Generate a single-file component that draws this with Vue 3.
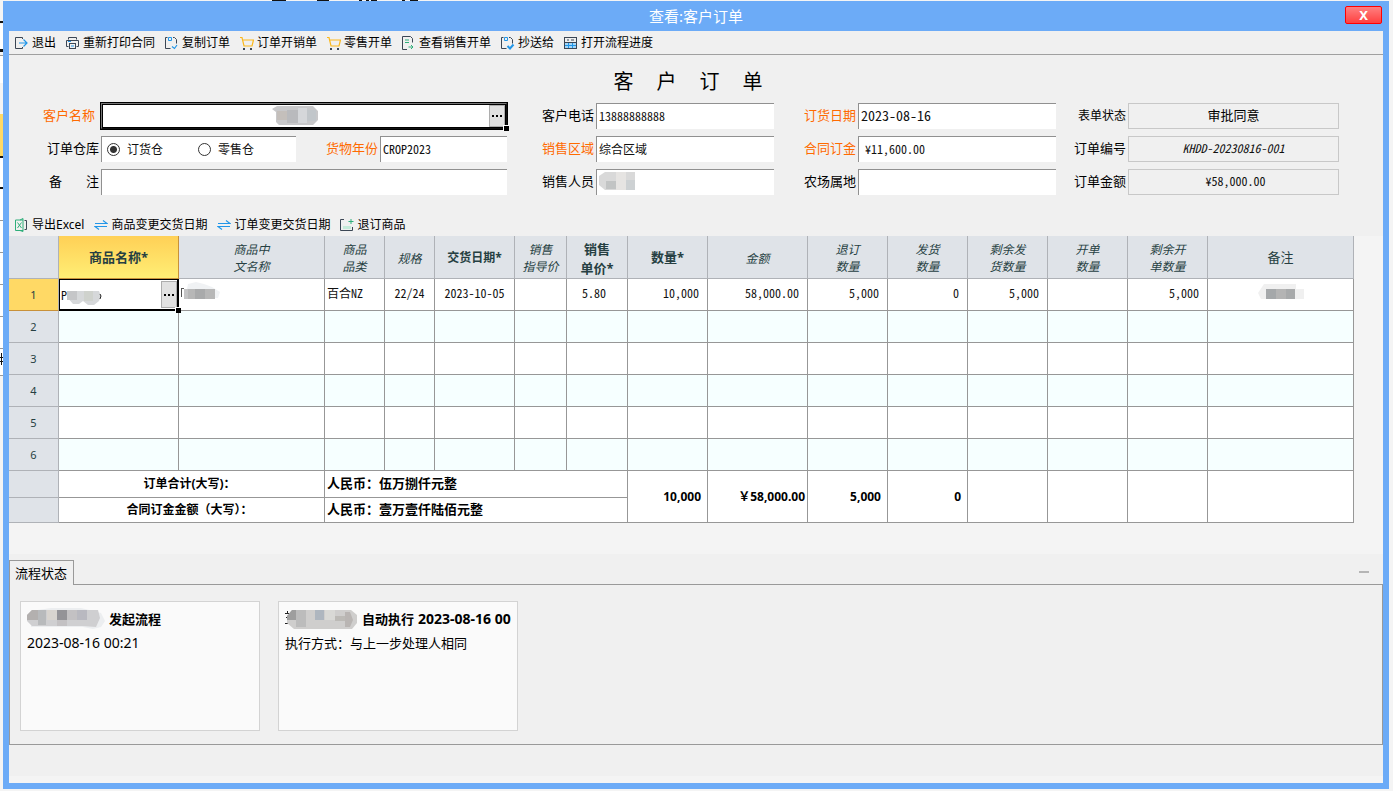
<script setup>
import { ref } from 'vue'

const mainActions = [
  { text: '退出', icon: 'exit' },
  { text: '重新打印合同', icon: 'print' },
  { text: '复制订单', icon: 'copy' },
  { text: '订单开销单', icon: 'cart' },
  { text: '零售开单', icon: 'cart' },
  { text: '查看销售开单', icon: 'doc' },
  { text: '抄送给', icon: 'send' },
  { text: '打开流程进度', icon: 'grid' },
]
const tableActions = [
  { text: '导出Excel', icon: 'excel' },
  { text: '商品变更交货日期', icon: 'swap' },
  { text: '订单变更交货日期', icon: 'swap' },
  { text: '退订商品', icon: 'back' },
]

const warehouse = ref('订货仓')
const cropYear = ref('CROP2023')
const remark = ref('')
const phone = ref('13888888888')
const region = ref('综合区域')
const orderDate = ref('2023-08-16')
const deposit = ref('￥11,600.00')
const farm = ref('')

const columns = [
  { lines: ['商品名称*'], width: 120, kind: 'bold active' },
  { lines: ['商品中', '文名称'], width: 146, kind: 'calc' },
  { lines: ['商品', '品类'], width: 60, kind: 'calc' },
  { lines: ['规格'], width: 50, kind: 'calc' },
  { lines: ['交货日期*'], width: 80, kind: 'bold small' },
  { lines: ['销售', '指导价'], width: 52, kind: 'calc' },
  { lines: ['销售', '单价*'], width: 61, kind: 'bold two' },
  { lines: ['数量*'], width: 80, kind: 'bold' },
  { lines: ['金额'], width: 100, kind: 'calc' },
  { lines: ['退订', '数量'], width: 80, kind: 'calc' },
  { lines: ['发货', '数量'], width: 80, kind: 'calc' },
  { lines: ['剩余发', '货数量'], width: 80, kind: 'calc' },
  { lines: ['开单', '数量'], width: 80, kind: 'calc' },
  { lines: ['剩余开', '单数量'], width: 80, kind: 'calc' },
  { lines: ['备注'], width: 146, kind: 'plain' },
]
const firstRow = [
  { v: '百合NZ', a: 'left' },
  { v: '22/24', a: 'center' },
  { v: '2023-10-05', a: 'center' },
  { v: '', a: 'left' },
  { v: '5.80', a: 'price' },
  { v: '10,000', a: 'right' },
  { v: '58,000.00', a: 'right' },
  { v: '5,000', a: 'right' },
  { v: '0', a: 'right' },
  { v: '5,000', a: 'right' },
  { v: '', a: 'right' },
  { v: '5,000', a: 'right' },
]
const totals = ['10,000', '￥58,000.00', '5,000', '0', '', '', '', '']
</script>

<template>
  <div class="desk">
    <svg class="behind" width="3" height="400" viewBox="0 0 3 400" aria-hidden="true">
      <path fill="#fff" d="M0 24h3v27H0zM0 56h3v27H0zM0 158h3v218H0z" />
      <path fill="#111" d="M0 21h3v2H0zM0 49h3v3H0zM0 156h3v2H0zM0 187h3v2H0zM0 357h3v1H0zM0 361h3v1H0zM1 353h1v12H1z" />
      <path fill="#ffd965" d="M0 114h3v42H0z" />
      <path fill="#999" d="M0 55h3v1H0zM0 220h3v1H0zM0 252h3v1H0zM0 284h3v1H0zM0 316h3v1H0zM0 348h3v1H0zM0 375h3v1H0z" />
    </svg>
    <svg class="behind" width="440" height="1" viewBox="0 0 440 1" aria-hidden="true">
      <path fill="#111" d="M272 0h14v1h-14zM317 0h12v1h-12zM359 0h3v1h-3zM366 0h3v1h-3zM371 0h6v1h-6zM402 0h3v1h-3zM410 0h8v1h-8z" />
    </svg>

    <main class="window">
      <header class="titlebar">
        <span>查看:客户订单</span>
        <button class="close" type="button" aria-label="关闭">X</button>
      </header>

      <template v-for="(group, gi) in [mainActions, tableActions]" :key="gi">
        <nav class="toolbar" :class="{ main: gi === 0, sub: gi === 1 }">
          <button v-for="a in group" :key="a.text" type="button" class="tool">
            <svg width="14" height="14" viewBox="0 0 14 14" fill="none" stroke="#3b4654" stroke-width="1">
              <template v-if="a.icon === 'exit'">
                <path d="M7.500 3V1.500h-7v11h7V11" />
                <path d="M4 7h8M8.500 3.500 12 7l-3.500 3.500" stroke="#2196e8" stroke-width="1.200" />
              </template>
              <template v-else-if="a.icon === 'print'">
                <path d="M2.500 3.500v-2h8v2M2.500 10.500h-2v-6h12v6h-2" />
                <rect x="3.500" y="7.500" width="6" height="5" />
                <path d="M2 5.500h3M5 10h3" stroke="#2196e8" />
              </template>
              <template v-else-if="a.icon === 'copy' || a.icon === 'send'">
                <path d="M5.500 12.500h-5v-11h2M8 1.500h1.500l2 2v4" />
                <path d="M3.500 1.500v3h3v-3z" stroke="#2196e8" />
                <path v-if="a.icon === 'copy'" d="m7 10.500 2.500 2L12 9" stroke="#2196e8" stroke-width="1.200" />
                <path v-else d="m6.500 10 2.500 2.500L12.500 8.500" stroke="#2196e8" stroke-width="2" />
              </template>
              <template v-else-if="a.icon === 'cart'">
                <path d="M0 1.500h2l2 8.500h8l1.500-6H3" stroke="#fbb81c" stroke-width="1.200" />
                <path fill="#3b4654" stroke="none" d="M3 12h2v2H3zM10 12h2v2h-2z" />
              </template>
              <template v-else-if="a.icon === 'doc'">
                <path d="M5 13.500H.5v-13h8l2 2v4" />
                <path d="M3 4h4M3 6.500h4M6.500 11h4.500M9 9l2 2-2 2" stroke="#2fae7a" />
              </template>
              <template v-else-if="a.icon === 'grid'">
                <path fill="#a6d6f7" stroke="none" d="M1 7h11v5H1z" />
                <path d="M1 9.500h11M4.500 7v5M8.500 7v5" stroke="#2196e8" />
                <rect x=".5" y="1.500" width="12" height="11" />
                <path d="M.5 6.500h12M3 4h2M7 4h3" />
              </template>
              <template v-else-if="a.icon === 'excel'">
                <path d="M8 2H.5v10.500H8M8 .5v13l-3-1M8 .5 5 2M2.500 4.500l4 5.500M6.500 4.500l-4 5.500" stroke="#2fae7a" />
                <path d="M9.500 2.500h2v9h-2" />
              </template>
              <template v-else-if="a.icon === 'swap'">
                <path d="M1 5.500h12L9 2.500M13 8.500H1l4 3" stroke="#2196e8" stroke-width="1.100" />
              </template>
              <template v-else>
                <path fill="#c5ebda" stroke="none" d="M3 8h8v3H3z" />
                <path d="M4 1.500H.5v11h12V9" />
                <path d="M11 1v5M8.500 3.500h5" stroke="#2fae7a" />
              </template>
            </svg>
            <span>{{ a.text }}</span>
          </button>
        </nav>

        <form v-if="gi === 0" class="form" @submit.prevent>
          <h1><span>客</span> <span>户</span> <span>订</span> <span>单</span></h1>
          <div class="fields">
            <label class="lead req" for="customer">客户名称</label>
            <div class="customer">
              <input id="customer" type="text" readonly />
              <svg class="over-name" width="46" height="20" viewBox="0 0 46 20" aria-hidden="true">
                <path fill="#c8c8ca" d="M5 1h36l5 5v9l-5 5H7l-3-3V7L0 4z" />
                <path fill="#c4bfbb" d="M5 6h10v9H5z" />
                <path fill="#b9babd" d="M15 5h11v13H15z" />
                <path fill="#d5d7da" d="M26 3h9v15h-9z" />
                <path fill="#c1c6ca" d="M35 5h9v11h-9z" />
              </svg>
              <button class="more" type="button" aria-label="选择客户"><i></i><i></i><i></i></button>
              <span class="handle"></span>
            </div>
            <label for="phone">客户电话</label>
            <input id="phone" v-model="phone" class="box" type="text" />
            <label class="req" for="date">订货日期</label>
            <input id="date" v-model="orderDate" class="box date" type="text" />
            <label class="small" for="state">表单状态</label>
            <output id="state" class="ro state">审批同意</output>

            <span class="lbl">订单仓库</span>
            <div class="pair">
              <div class="box radios" role="radiogroup" aria-label="订单仓库">
                <label v-for="w in ['订货仓', '零售仓']" :key="w">
                  <input v-model="warehouse" type="radio" name="warehouse" :value="w" />{{ w }}
                </label>
              </div>
              <label class="req" for="crop">货物年份</label>
              <input id="crop" v-model="cropYear" class="box" type="text" />
            </div>
            <label class="req" for="region">销售区域</label>
            <input id="region" v-model="region" class="box" type="text" />
            <label class="req" for="deposit">合同订金</label>
            <input id="deposit" v-model="deposit" class="box money" type="text" />
            <label for="no">订单编号</label>
            <output id="no" class="ro slant">KHDD-20230816-001</output>

            <label class="spread" for="remark"><span>备</span><span>注</span></label>
            <input id="remark" v-model="remark" class="box" type="text" />
            <label for="seller">销售人员</label>
            <div class="masked">
              <input id="seller" class="box" type="text" readonly />
              <svg class="over-seller" width="38" height="20" viewBox="0 0 38 20" aria-hidden="true">
                <path fill="#d9d9d9" d="M7 1h30v18H7L1 14V5z" />
                <path fill="#c2c4c4" d="M8 10h10v8H8z" />
                <path fill="#e6e4e2" d="M18 1h10v18H18z" />
                <path fill="#cdd1d3" d="M28 9h9v10h-9z" />
              </svg>
            </div>
            <label for="farm">农场属地</label>
            <input id="farm" v-model="farm" class="box" type="text" />
            <label for="sum">订单金额</label>
            <output id="sum" class="ro money">￥58,000.00</output>
          </div>
        </form>
      </template>

      <section class="grid-area">
        <table>
          <colgroup>
            <col class="c-no" />
            <col v-for="(c, i) in columns" :key="i" :style="{ width: c.width + 'px' }" />
          </colgroup>
          <thead>
            <tr>
              <th class="no"></th>
              <th v-for="(c, i) in columns" :key="i" :class="c.kind" scope="col">
                <template v-for="(l, j) in c.lines" :key="j"><br v-if="j" />{{ l }}</template>
              </th>
            </tr>
          </thead>
          <tbody>
            <tr>
              <th class="no current" scope="row">1</th>
              <td class="picked">
                <div class="cell">
                  <span>P</span>
                  <svg width="35" height="16" viewBox="0 0 35 16" aria-hidden="true">
                    <path fill="#d6d8da" d="M0 2h32l2 5-2 5-5 4h-6l-5-4-4 3H6l-6-7z" />
                    <path fill="#c5c6c8" d="M0 2h10v9H0z" />
                    <path fill="#cfd2cd" d="M17 2h9v10h-9z" />
                    <path fill="none" stroke="#222" d="M33 5l1 2-1 3" />
                  </svg>
                  <button class="more" type="button" aria-label="选择商品"><i></i><i></i><i></i></button>
                </div>
                <span class="frame"></span><span class="handle"></span>
              </td>
              <td class="left">
                <svg class="inline-mask" width="40" height="18" viewBox="0 0 40 18" aria-hidden="true">
                  <path fill="#f0f2f4" d="M7 2l8-2 8 2 8 3 8 5-2 6-33 1z" />
                  <path fill="#555" d="M0 6h3v1H1v8H0z" />
                  <path fill="#b7b7b7" d="M3 7h31v10H3z" />
                  <path fill="#a9aaab" d="M14 7h10v10H14z" />
                  <path fill="#c4c4c5" d="M3 7h4v10H3z" />
                </svg>
              </td>
              <td v-for="(c, i) in firstRow" :key="i" :class="c.a">{{ c.v }}</td>
              <td class="center">
                <svg class="inline-mask" width="46" height="16" viewBox="0 0 46 16" aria-hidden="true">
                  <path fill="#f0f0f0" d="M6 1h32v5h8v10H3L0 10z" />
                  <path fill="#a5a8aa" d="M8 6h10v10H8z" />
                  <path fill="#b4b4b4" d="M18 6h10v10H18z" />
                  <path fill="#a8aaab" d="M28 6h9v10h-9z" />
                </svg>
              </td>
            </tr>
            <tr v-for="n in [2, 3, 4, 5, 6]" :key="n">
              <th class="no" scope="row">{{ n }}</th>
              <td v-for="(c, i) in columns" :key="i"></td>
            </tr>
          </tbody>
          <tfoot>
            <tr class="first">
              <th class="no"></th>
              <td colspan="2" class="caption">订单合计(大写)：</td>
              <td colspan="5" class="words">人民币：伍万捌仟元整</td>
              <td v-for="(t, i) in totals" :key="i" rowspan="2" class="total" :class="{ wide: i === 1 }">{{ t }}</td>
            </tr>
            <tr class="second">
              <th class="no"></th>
              <td colspan="2" class="caption">合同订金金额（大写）：</td>
              <td colspan="5" class="words">人民币：壹万壹仟陆佰元整</td>
            </tr>
          </tfoot>
        </table>
      </section>

      <section class="flow">
        <div class="tabs" role="tablist">
          <button class="tab" type="button" role="tab" aria-selected="true">流程状态</button>
          <button class="collapse" type="button" aria-label="收起"></button>
        </div>
        <div class="panel" role="tabpanel">
          <article class="card">
            <h2>
              <svg width="78" height="22" viewBox="0 0 78 22" aria-hidden="true">
                <path fill="#eceef0" d="M4 3l20-3h30l20 5 4 8-4 6-8 2-10-2H4z" />
                <path fill="#cfcfd1" d="M5 2h66l2 8-4 9-14-1H5l-5-5V7z" />
                <path fill="#b3b0af" d="M5 2h6v10H0V7z" />
                <path fill="#b8babc" d="M11 2h8v15h-8z" />
                <path fill="#d8d4cf" d="M20 2h10v10H20z" />
                <path fill="#949397" d="M30 2h10v10H30z" />
                <path fill="#c3c1c3" d="M40 2h10v10H40zM30 12h10v6H30z" />
                <path fill="#b9b9c0" d="M50 2h10v10H50z" />
              </svg>
              <span>发起流程</span>
            </h2>
            <p class="num">2023-08-16 00:21</p>
          </article>
          <article class="card">
            <h2>
              <svg width="73" height="22" viewBox="0 0 73 22" aria-hidden="true">
                <path fill="#222" d="M0 5h4v1H0zM1 9h3v1H1zM0 15h3v1H0zM2 3h1v3H2z" />
                <path fill="#cfcecd" d="M7 2h59l6 5v8l-5 6H9l-7-6V8z" />
                <path fill="#9e9e9e" d="M7 2h4v10H2V8z" />
                <path fill="#bcbcbc" d="M11 2h10v17H11z" />
                <path fill="#aeb6bf" d="M30 2h9v10h-9z" />
                <path fill="#d9d9d6" d="M40 2h10v10H40z" />
                <path fill="#bcbab6" d="M50 8h10v5H50z" />
                <path fill="#b9b5b3" d="M60 4h5l3 8-3 7h-5z" />
              </svg>
              <span>自动执行</span>
              <time class="num">2023-08-16 00:21</time>
            </h2>
            <p>执行方式：与上一步处理人相同</p>
          </article>
        </div>
        <footer class="status"></footer>
      </section>
    </main>
  </div>
</template>

<style>
body {
  margin: 0;
  background: #f4f4f4;
}
</style>

<style scoped>
* {
  box-sizing: border-box;
}
.desk {
  position: relative;
  min-height: 100vh;
  padding: 1px 4px 2px 3px;
  display: flex;
  font: 13px/18px "Noto Sans", "Noto Sans CJK SC", sans-serif;
  color: #000;
}
.behind {
  position: absolute;
  left: 0;
  top: 0;
}
button {
  font: inherit;
  color: inherit;
  border: 0;
  padding: 0;
  background: none;
}
.window {
  flex: 1;
  min-width: 0;
  display: flex;
  flex-direction: column;
  border: solid #6cabf7;
  border-width: 0 6px 6px;
  background: #f4f4f4;
}
.toolbar,
.form,
.flow {
  background: #f0f0f0;
}
.titlebar {
  height: 30px;
  background: #6cabf7;
  color: #fff;
  font-size: 15px;
  display: flex;
  align-items: center;
  justify-content: center;
  position: relative;
}
.close {
  position: absolute;
  right: 1px;
  top: 5px;
  width: 37px;
  height: 18px;
  font-size: 13px;
  line-height: 16px;
  font-weight: 700;
  border: 1px solid #f00;
  border-radius: 2px;
  background: linear-gradient(#ff8080, #ff4040);
}
.toolbar {
  display: flex;
  align-items: center;
  gap: 10px;
  height: 24px;
  padding-left: 6px;
  font-size: 12px;
}
.toolbar.main {
  border-bottom: 1px solid #a0a0a0;
}
.toolbar.sub {
  height: 22px;
}
.tool {
  display: flex;
  align-items: center;
  gap: 3px;
  white-space: nowrap;
}
.form {
  padding-bottom: 19px;
}
h1 {
  display: flex;
  justify-content: center;
  gap: 23px;
  margin: 0;
  padding: 12px 16px 8px 0;
  font-size: 20px;
  line-height: 28px;
  font-weight: 400;
  font-family: "Noto Sans CJK SC", sans-serif;
}
.fields {
  display: grid;
  grid-template-columns: 92px 406fr 89px 178fr 84px 198fr 72px 211fr;
  grid-auto-rows: 26px;
  row-gap: 7px;
  margin-right: 44px;
}
.fields > label,
.lbl,
.pair > label {
  font-family: "Noto Sans CJK SC", sans-serif;
  white-space: nowrap;
  text-align: right;
  line-height: 24px;
  padding-right: 2px;
}
.fields > label.lead {
  padding-right: 6px;
}
.fields > label.small {
  font-size: 12px;
}
.fields > label.spread {
  display: flex;
  justify-content: space-between;
  padding-left: 40px;
}
.fields .req {
  color: #ff6a00;
}
.box,
.ro,
.customer input,
tbody td {
  font-family: "Noto Sans CJK SC", sans-serif;
  font-feature-settings: "hwid" 1;
  font-size: 12px;
  color: #111;
}
.box {
  width: 100%;
  height: 26px;
  min-width: 0;
  margin: 0;
  padding: 0 2px 3px;
  border: solid #909090;
  border-width: 1px 0 0 1px;
  border-radius: 0;
  background: #fff;
  outline: 0;
}
.box.date {
  font-size: 14px;
}
.box.money {
  padding-left: 6px;
}
.ro {
  border: 1px solid #c8c8c8;
  text-align: center;
  line-height: 22px;
}
.ro.money {
  padding-left: 4px;
}
.ro.state {
  font-size: 13px;
  color: #000;
}
.ro.slant {
  font-style: italic;
}
.pair {
  display: grid;
  grid-template-columns: 195fr 84px 127fr;
}
.radios {
  display: grid;
  grid-template-columns: 91px 1fr;
  align-items: center;
  padding: 0 0 1px 5px;
}
.radios label {
  display: flex;
  align-items: center;
  gap: 7px;
}
.radios input {
  appearance: none;
  width: 13px;
  height: 13px;
  margin: 0;
  border: 1px solid #333;
  border-radius: 50%;
  background: #fff;
}
.radios input:checked {
  background: radial-gradient(circle, #333 0 3px, #fff 4px);
}
.customer,
.masked {
  position: relative;
}
.customer {
  display: flex;
  border: 1px solid #111;
  border-top-color: #777;
  border-left-color: #777;
  box-shadow: 0 0 0 1px #000, inset 0 0 0 1px #000;
  padding: 1px;
  background: #fff;
}
.customer input {
  flex: 1;
  min-width: 0;
  border: 0;
  padding: 0;
  background: transparent;
  outline: 0;
}
.over-name {
  position: absolute;
  left: 42%;
  top: 1px;
}
.over-seller {
  position: absolute;
  left: 2px;
  top: 2px;
}
.more {
  width: 16px;
  display: flex;
  align-items: center;
  justify-content: center;
  gap: 2px;
  background: #e1e1e1;
  border: 1px solid #adadad;
}
.more i {
  width: 2px;
  height: 2px;
  background: #000;
}
.handle {
  position: absolute;
  right: -3px;
  bottom: -3px;
  width: 6px;
  height: 6px;
  background: #000;
  border: solid #fff;
  border-width: 1px 0 0 1px;
  z-index: 2;
}
.grid-area {
  background: #f4f4f4;
  padding: 0 29px 31px 0;
}
table {
  width: 100%;
  table-layout: fixed;
  border-spacing: 0;
}
.c-no {
  width: 50px;
}
th,
td {
  padding: 0;
  border: solid #979797;
  border-width: 0 1px 1px 0;
  background: #fff;
  overflow: hidden;
  white-space: nowrap;
}
th {
  background: #dfe3e8;
  border-color: #afb2b7;
  color: #263f42;
  font-weight: 400;
}
thead th {
  height: 43px;
  font-size: 13px;
  line-height: 19px;
}
thead th.bold {
  font-weight: 700;
}
thead th.two {
  padding-top: 4px;
}
thead th.small {
  font-size: 12px;
}
thead th.calc {
  padding-top: 2px;
  font-size: 12px;
  line-height: 17px;
  font-style: italic;
}
thead th.active {
  background: linear-gradient(#ffd056, #ffee75);
  border-color: #c8913a;
}
tbody tr {
  height: 32px;
}
tbody td {
  padding-bottom: 3px;
}
tbody tr:nth-child(even) td {
  background: #f6ffff;
}
th.no {
  font-size: 11px;
}
th.no.current {
  background: #ffd965;
  border-bottom-color: #c8913a;
}
td.left {
  text-align: left;
  padding-left: 2px;
}
td.center {
  text-align: center;
}
td.price {
  text-align: center;
  padding-right: 6px;
}
td.right {
  text-align: right;
  padding-right: 8px;
}
td.picked {
  position: relative;
  overflow: visible;
  padding: 0;
}
.cell {
  display: flex;
  align-items: center;
  height: 31px;
  padding: 2px 1px 2px 2px;
}
.cell svg {
  margin-top: 4px;
}
.cell .more {
  margin-left: auto;
  align-self: stretch;
}
.frame {
  position: absolute;
  inset: 0 -1px -1px 0;
  border: 1px solid #000;
  border-right-width: 2px;
  border-bottom-width: 2px;
  pointer-events: none;
  z-index: 1;
}
.inline-mask {
  display: inline-block;
  vertical-align: middle;
  margin-bottom: 4px;
}
tfoot td {
  font-weight: 700;
}
tfoot .first {
  height: 27px;
}
tfoot .second {
  height: 25px;
}
tfoot .caption {
  font-size: 12px;
  text-align: center;
  padding-right: 4px;
}
tfoot .words {
  padding: 0 0 2px 2px;
}
tfoot .total {
  font-size: 12px;
  text-align: right;
  padding-right: 6px;
}
tfoot .total.wide {
  padding-right: 2px;
}
.flow {
  padding-top: 6px;
}
.tabs {
  display: flex;
  align-items: stretch;
  height: 24px;
}
.tab {
  padding: 0 6px 0 5px;
  height: 25px;
  border: 1px solid #999;
  border-bottom: 0;
  background: #f0f0f0;
  z-index: 1;
}
.collapse {
  width: 10px;
  height: 2px;
  margin: 11px 14px 0 auto;
  background: #b5b5b5;
}
.panel {
  display: flex;
  gap: 18px;
  padding: 16px 10px 13px;
  border: 1px solid #999;
}
.card {
  flex: 0 1 240px;
  min-width: 0;
  min-height: 130px;
  padding: 5px 6px;
  border: 1px solid #d3d3d3;
  background: #fafafa;
}
.card h2 {
  display: flex;
  align-items: center;
  gap: 4px;
  height: 24px;
  margin: 0;
  overflow: hidden;
  white-space: nowrap;
  font-size: 13px;
  line-height: 24px;
}
.card svg {
  flex: none;
}
.card p {
  margin: 0;
  line-height: 24px;
}
.card .num {
  font-size: 14px;
}
.status {
  height: 31px;
}
</style>
